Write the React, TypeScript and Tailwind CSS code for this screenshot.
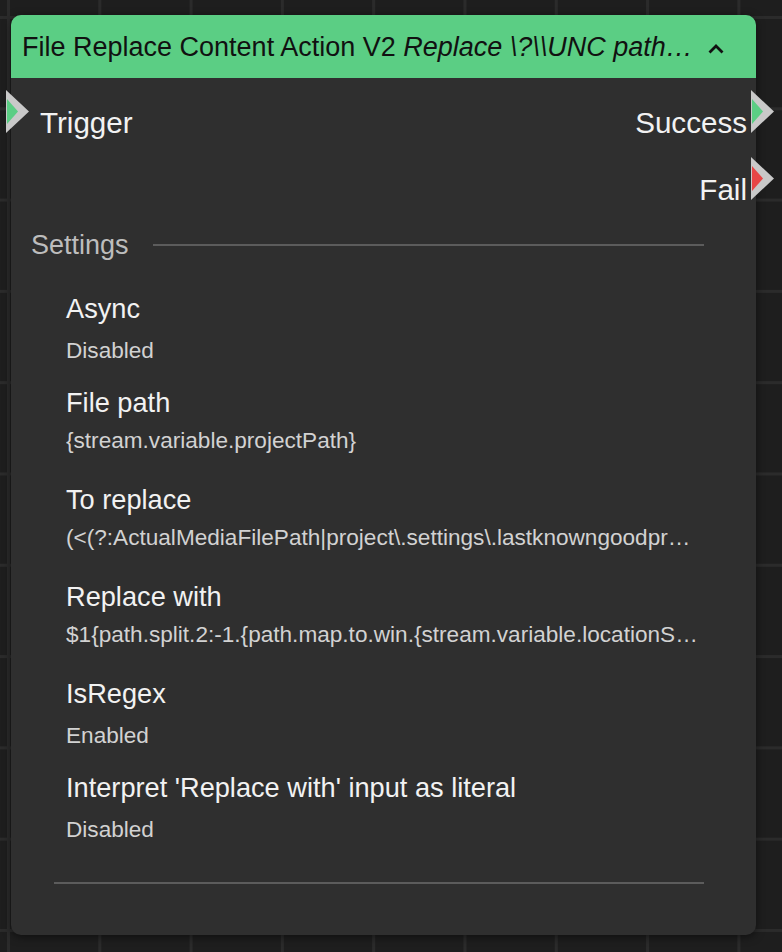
import { ReactNode } from 'react';

type Setting = { label: string; value: string; kind: 'toggle' | 'text' };

const settings: Setting[] = [
    { label: 'Async', value: 'Disabled', kind: 'toggle' },
    { label: 'File path', value: '{stream.variable.projectPath}', kind: 'text' },
    { label: 'To replace', value: '(<(?:ActualMediaFilePath|project\\.settings\\.lastknowngoodpr…', kind: 'text' },
    { label: 'Replace with', value: '$1{path.split.2:-1.{path.map.to.win.{stream.variable.locationS…', kind: 'text' },
    { label: 'IsRegex', value: 'Enabled', kind: 'toggle' },
    { label: "Interpret 'Replace with' input as literal", value: 'Disabled', kind: 'toggle' },
];

// port arrow: grey triangle with coloured inner tip
const Port = ({ color }: { color: string }) => (
    <svg width="23" height="43" viewBox="0 0 23 43">
        <polygon points="0,0 23,21.5 0,43" fill="#c9c9c9" />
        <polygon points="1,9 12,21.5 1,34" fill={color} />
    </svg>
);

const PortRow = ({ side, color, children }: { side: 'in' | 'out'; color: string; children: ReactNode }) => (
    <div className={`relative h-[67px] flex items-center ${side === 'out' ? 'justify-end' : ''}`}>
        <div className={`absolute top-[1px] ${side === 'out' ? 'right-[-27px]' : 'left-[-34px]'}`}>
            <Port color={color} />
        </div>
        <span className="text-[29.6px] leading-none text-[#f2f2f2]">{children}</span>
    </div>
);

const App = () => {
    return (
        <div className="w-[782px] h-[952px] overflow-hidden bg-[#1e1e1e] bg-[linear-gradient(to_right,#2b2b2b_3px,transparent_3px),linear-gradient(to_bottom,#2b2b2b_3px,transparent_3px)] bg-[size:91.3px_91.3px] bg-[position:7px_16px] pl-[11px] pt-[15px] font-['Liberation_Sans',Arial,sans-serif]">
            <div className="w-[745px] rounded-[10px] bg-[#2f2f2f] shadow-[0_2px_8px_rgba(0,0,0,0.5)]">
                {/* header */}
                <div className="h-[63px] rounded-t-[10px] bg-[#5bce84] flex items-center pl-[11px] pr-[32px] gap-[7px] text-[#111]">
                    <div className="min-w-0 flex-1 truncate text-[27px] leading-[32px]">
                        File Replace Content Action V2 <i>Replace \?\\UNC path…</i>
                    </div>
                    <svg width="16" height="11" viewBox="0 0 16 11" className="shrink-0 mt-[3px]">
                        <polyline points="1.5,9.5 8,3 14.5,9.5" fill="none" stroke="#111" strokeWidth="2.8" />
                    </svg>
                </div>

                {/* ports */}
                <div className="flex justify-between pt-[11px] pl-[29px] pr-[9px]">
                    <div>
                        <PortRow side="in" color="#5bce84">Trigger</PortRow>
                    </div>
                    <div>
                        <PortRow side="out" color="#5bce84">Success</PortRow>
                        <PortRow side="out" color="#e84646">Fail</PortRow>
                    </div>
                </div>

                {/* settings */}
                <div className="mt-[6px] pl-[20px] pr-[52px] flex items-center gap-[24px]">
                    <span className="text-[27px] leading-[32px] text-[#bdbdbd]">Settings</span>
                    <div className="flex-1 h-[2px] bg-[#5c5c5c]" />
                </div>

                <div className="mt-[32px] pl-[55px] pr-[52px] flex flex-col gap-[22px]">
                    {settings.map((s) => (
                        <div key={s.label} className="min-w-0">
                            <div className="text-[27.2px] leading-[32px] text-[#f2f2f2]">{s.label}</div>
                            <div className={`truncate text-[22.6px] leading-[28px] text-[#d2d2d2] ${s.kind === 'text' ? 'mt-2 pb-[7px]' : 'mt-3'}`}>
                                {s.value}
                            </div>
                        </div>
                    ))}
                </div>

                <div className="mt-[38px] ml-[43px] mr-[52px] h-[2px] bg-[#5c5c5c]" />
                <div className="h-[51px]" />
            </div>
        </div>
    );
};

export default App;
